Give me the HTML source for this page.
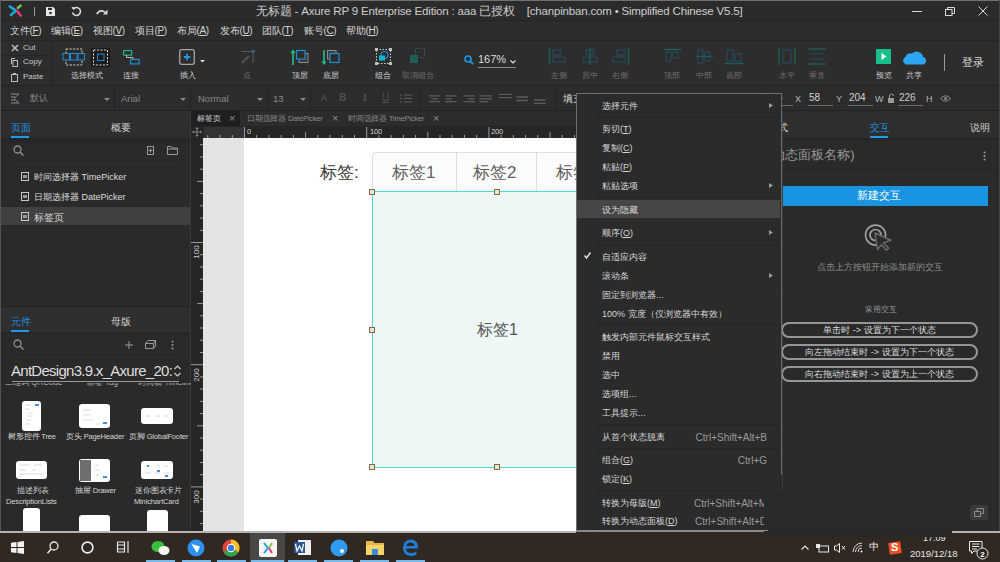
<!DOCTYPE html>
<html><head><meta charset="utf-8">
<style>
*{margin:0;padding:0;box-sizing:border-box}
html,body{width:1000px;height:562px;overflow:hidden;background:#2b2b2b;font-family:"Liberation Sans",sans-serif;color:#d8d8d8}
.a{position:absolute}
.t{position:absolute;white-space:nowrap;line-height:1}
svg{position:absolute;overflow:visible}
.mi{position:absolute;top:26px;font-size:10px;color:#d4d4d4;white-space:nowrap;line-height:1;letter-spacing:-0.3px}
.lb{position:absolute;top:72px;font-size:7.5px;color:#cfcfcf;white-space:nowrap;line-height:1;text-align:center;width:60px;margin-left:-30px}
.lbd{color:#6e6e6e}
.sb{position:absolute;top:93px;font-size:9.5px;color:#8a8a8a;white-space:nowrap;line-height:1}
.dv{position:absolute;width:1px;background:#222}
.cm{position:absolute;left:602px;font-size:9px;color:#d6d6d6;white-space:nowrap;line-height:1}
.cms{position:absolute;right:233px;font-size:10px;color:#9a9a9a;white-space:nowrap;line-height:1}
</style></head><body>
<!-- ============ TITLE BAR ============ -->
<div class="a" style="left:0;top:0;width:1000px;height:21px;background:#2b2b2b"></div>
<div class="a" style="left:0;top:0;width:1000px;height:1px;background:#707070"></div>
<div class="a" style="left:0;top:20px;width:1000px;height:1px;background:#242424"></div>
<div class="a" style="left:0;top:0;width:1px;height:532px;background:#555"></div>
<div class="a" style="left:999px;top:0;width:1px;height:532px;background:#444"></div>
<!-- logo -->
<svg style="left:7px;top:4px" width="16" height="14" viewBox="0 0 16 14">
<path d="M1.8 1.8 L8.8 6.6 L3.2 11.8" stroke="#1ea6dc" stroke-width="2.6" fill="none" stroke-linejoin="round"/>
<path d="M10 7.2 L13.8 11.6" stroke="#e2357c" stroke-width="2.6" stroke-linecap="round"/>
<path d="M10.8 4 L13.6 1.6" stroke="#86c24c" stroke-width="2.4" stroke-linecap="round"/>
</svg>
<div class="a" style="left:34px;top:7px;width:1px;height:9px;background:#9a9a9a"></div>
<!-- save -->
<svg style="left:46px;top:7px" width="9" height="9" viewBox="0 0 9 9"><path d="M0 0 H7 L9 2 V9 H0 Z" fill="#e8e8e8"/><rect x="2" y="0.8" width="4" height="2.2" fill="#2b2b2b"/><circle cx="4.5" cy="6" r="1.3" fill="#2b2b2b"/></svg>
<!-- undo -->
<svg style="left:71px;top:6px" width="11" height="11" viewBox="0 0 11 11"><path d="M2.2 3.2 A4 4 0 1 1 1.6 6.5" stroke="#dcdcdc" stroke-width="1.5" fill="none"/><path d="M0.5 1 L3.2 1.3 L2.3 4.2 Z" fill="#dcdcdc"/></svg>
<!-- redo -->
<svg style="left:96px;top:8px" width="12" height="7" viewBox="0 0 12 7"><path d="M0.8 6 Q4.5 0.8 9 4.2" stroke="#dcdcdc" stroke-width="1.7" fill="none"/><path d="M11.5 1.5 L11.5 6.5 L7 6.5 Z" fill="#dcdcdc"/></svg>
<div class="t" id="title" style="left:256px;top:6px;font-size:11.5px;color:#cdcdcd;letter-spacing:-0.18px">无标题 - Axure RP 9 Enterprise Edition : aaa 已授权 &nbsp;&nbsp; [chanpinban.com • Simplified Chinese V5.5]</div>
<!-- window controls -->
<div class="a" style="left:912px;top:11px;width:10px;height:1px;background:#d8d8d8"></div>
<svg style="left:945px;top:7px" width="10" height="9" viewBox="0 0 10 9"><rect x="0.5" y="2.5" width="6.5" height="6" stroke="#d8d8d8" fill="none"/><path d="M2.5 2.5 V0.5 H9.5 V6.5 H7" stroke="#d8d8d8" fill="none"/></svg>
<svg style="left:978px;top:6px" width="10" height="10" viewBox="0 0 10 10"><path d="M0.5 0.5 L9.5 9.5 M9.5 0.5 L0.5 9.5" stroke="#d8d8d8" stroke-width="1"/></svg>

<!-- ============ MENU BAR ============ -->
<div class="a" style="left:1px;top:21px;width:998px;height:19px;background:#2c2c2c"></div>
<div class="mi" style="left:10px">文件(<u>F</u>)</div>
<div class="mi" style="left:51px">编辑(<u>E</u>)</div>
<div class="mi" style="left:93px">视图(<u>V</u>)</div>
<div class="mi" style="left:135px">项目(<u>P</u>)</div>
<div class="mi" style="left:177px">布局(<u>A</u>)</div>
<div class="mi" style="left:220px">发布(<u>U</u>)</div>
<div class="mi" style="left:262px">团队(<u>T</u>)</div>
<div class="mi" style="left:304px">账号(<u>C</u>)</div>
<div class="mi" style="left:346px">帮助(<u>H</u>)</div>
<!-- ============ TOOLBAR ============ -->
<div class="a" style="left:1px;top:40px;width:998px;height:45px;background:#2d2d2d"></div>
<div class="a" style="left:1px;top:40px;width:998px;height:1px;background:#262626"></div>
<div class="a" style="left:52px;top:41px;width:1px;height:44px;background:#242424"></div>
<div class="a" style="left:1px;top:55px;width:51px;height:1px;background:#262626"></div>
<div class="a" style="left:1px;top:70px;width:51px;height:1px;background:#262626"></div>
<!-- cut copy paste -->
<svg style="left:11px;top:44px" width="8" height="8" viewBox="0 0 8 8"><path d="M1 1 L7 7 M7 1 L1 7" stroke="#bdbdbd" stroke-width="1.5"/></svg>
<div class="t" style="left:23px;top:44px;font-size:8px;color:#c8c8c8">Cut</div>
<svg style="left:11px;top:58px" width="7" height="9" viewBox="0 0 7 9"><path d="M0.5 6 V0.5 H4" stroke="#bdbdbd" fill="none"/><rect x="2" y="2.5" width="4.5" height="6" stroke="#bdbdbd" fill="none"/></svg>
<div class="t" style="left:23px;top:58px;font-size:8px;color:#c8c8c8">Copy</div>
<svg style="left:11px;top:73px" width="7" height="9" viewBox="0 0 7 9"><rect x="0.5" y="1.5" width="6" height="7" stroke="#bdbdbd" fill="none"/><rect x="2" y="0" width="3" height="2" fill="#bdbdbd"/></svg>
<div class="t" style="left:23px;top:73px;font-size:8px;color:#c8c8c8">Paste</div>
<!-- select mode -->
<svg style="left:62px;top:48px" width="50" height="19" viewBox="0 0 50 19">
<rect x="4" y="1" width="16" height="16" stroke="#cfc8b8" stroke-dasharray="2.2 1.3" fill="none"/>
<rect x="1" y="5.5" width="6.5" height="6.5" stroke="#1e8fd6" stroke-width="1" fill="#2d2d2d"/>
<rect x="8.5" y="5.5" width="6.5" height="6.5" stroke="#1e8fd6" stroke-width="1" fill="#2d2d2d"/>
<rect x="16" y="5.5" width="6.5" height="6.5" stroke="#1e8fd6" stroke-width="1" fill="#2d2d2d"/>
<rect x="29" y="0" width="19" height="19" fill="#1a1a1a"/>
<rect x="31.5" y="2" width="14" height="15" stroke="#d8d0c2" stroke-dasharray="2.2 1.3" fill="none"/>
<rect x="35.5" y="6" width="6.5" height="6.5" stroke="#1e8fd6" stroke-width="1" fill="none"/>
</svg>
<div class="lb" style="left:87px">选择模式</div>
<!-- connect -->
<svg style="left:123px;top:50px" width="17" height="15" viewBox="0 0 17 15">
<rect x="0.6" y="0.6" width="8" height="4.5" stroke="#1db38a" stroke-width="1.2" fill="none"/>
<path d="M3.5 5 V7.5 H10 V9" stroke="#c9b79a" stroke-width="1" fill="none"/>
<rect x="7.6" y="9.4" width="8.5" height="4.5" stroke="#1e8fd6" stroke-width="1.2" fill="none"/>
</svg>
<div class="lb" style="left:131px">连接</div>
<!-- insert -->
<svg style="left:179px;top:49px" width="28" height="16" viewBox="0 0 28 16">
<rect x="0.7" y="0.7" width="14.6" height="14.6" rx="2" stroke="#a5a5a5" stroke-width="1.3" fill="none"/>
<path d="M8 4.8 V11.2 M4.8 8 H11.2" stroke="#1e9ae8" stroke-width="1.8"/>
<path d="M21 11 H26 L23.5 13.6 Z" fill="#dcdcdc"/>
</svg>
<div class="lb" style="left:188px">插入</div>
<!-- point dim -->
<svg style="left:240px;top:50px" width="15" height="15" viewBox="0 0 15 15">
<path d="M1 1.5 H13" stroke="#555" stroke-width="1"/><path d="M13 1 V13" stroke="#555" stroke-width="1.2"/><path d="M2 13 L9 6" stroke="#555" stroke-width="2"/><rect x="12" y="0" width="2.5" height="3" fill="#2a6aa0"/>
</svg>
<div class="lb lbd" style="left:247px">点</div>
<!-- top layer -->
<svg style="left:291px;top:49px" width="18" height="17" viewBox="0 0 18 17">
<path d="M2 16 V2" stroke="#1fc08e" stroke-width="1.6"/><path d="M-0.5 4 L2 0.5 L4.5 4 Z" fill="#1fc08e"/>
<rect x="8" y="4.5" width="9" height="9" stroke="#8b8b8b" fill="#3a3a3a"/>
<rect x="5.5" y="1.5" width="8.5" height="8.5" stroke="#1e8fd6" stroke-width="1.2" fill="#2d2d2d"/>
</svg>
<div class="lb" style="left:300px">顶层</div>
<!-- bottom layer -->
<svg style="left:322px;top:49px" width="18" height="17" viewBox="0 0 18 17">
<path d="M2 1 V15" stroke="#1fc08e" stroke-width="1.6"/><path d="M-0.5 12.5 L2 16 L4.5 12.5 Z" fill="#1fc08e"/>
<rect x="5.5" y="1.5" width="8.5" height="8.5" stroke="#8b8b8b" fill="#3a3a3a"/>
<rect x="8" y="4.5" width="9" height="9" stroke="#1e8fd6" stroke-width="1.2" fill="#2d2d2d"/>
</svg>
<div class="lb" style="left:331px">底层</div>
<!-- group -->
<svg style="left:375px;top:48px" width="17" height="17" viewBox="0 0 17 17">
<rect x="1.5" y="1.5" width="14" height="14" stroke="#d0d0d0" stroke-dasharray="1.5 1.5" fill="none"/>
<rect x="0" y="0" width="3" height="3" fill="#c0c0c0"/><rect x="14" y="0" width="3" height="3" fill="#c0c0c0"/><rect x="0" y="14" width="3" height="3" fill="#c0c0c0"/><rect x="14" y="14" width="3" height="3" fill="#c0c0c0"/>
<circle cx="9.5" cy="7" r="3.5" stroke="#1e8fd6" stroke-width="1.2" fill="none"/>
<rect x="4" y="7.5" width="6" height="5" fill="#14b6cc"/>
</svg>
<div class="lb" style="left:383px">组合</div>
<!-- ungroup dim -->
<svg style="left:409px;top:48px" width="17" height="17" viewBox="0 0 17 17">
<rect x="6.5" y="0.5" width="9" height="9" stroke="#3e5a6a" stroke-dasharray="1.5 1.5" fill="none"/>
<rect x="1" y="7" width="8" height="8" fill="#1f5f55"/>
</svg>
<div class="lb lbd" style="left:418px">取消组合</div>
<!-- zoom -->
<svg style="left:464px;top:55px" width="10" height="10" viewBox="0 0 10 10"><circle cx="4" cy="4" r="3" stroke="#1e9ae8" stroke-width="1.6" fill="none"/><path d="M6.2 6.2 L9.2 9.2" stroke="#1e9ae8" stroke-width="1.8"/></svg>
<div class="t" style="left:478px;top:54px;font-size:11px;color:#dcdcdc">167%</div>
<svg style="left:510px;top:60px" width="6" height="4" viewBox="0 0 6 4"><path d="M0.5 0.5 L3 3 L5.5 0.5" stroke="#dcdcdc" stroke-width="1.2" fill="none"/></svg>
<div class="a" style="left:478px;top:67px;width:38px;height:1px;background:#8a8a8a"></div>
<!-- align dim icons -->
<svg style="left:548px;top:48px" width="20" height="17" viewBox="0 0 20 17"><path d="M1.5 0 V17" stroke="#1b5d50" stroke-width="1.6"/><rect x="5" y="2" width="8" height="5" stroke="#234e66" fill="none"/><rect x="5" y="9" width="12" height="5" stroke="#234e66" fill="none"/></svg>
<div class="lb lbd" style="left:559px">左侧</div>
<svg style="left:581px;top:48px" width="18" height="17" viewBox="0 0 18 17"><path d="M9 0 V17" stroke="#1b5d50" stroke-width="1.4"/><rect x="5" y="2" width="8" height="5" stroke="#234e66" fill="none"/><rect x="2" y="9" width="14" height="5" stroke="#234e66" fill="none"/></svg>
<div class="lb lbd" style="left:590px">居中</div>
<svg style="left:610px;top:48px" width="20" height="17" viewBox="0 0 20 17"><path d="M18.5 0 V17" stroke="#1b5d50" stroke-width="1.6"/><rect x="7" y="2" width="8" height="5" stroke="#234e66" fill="none"/><rect x="3" y="9" width="12" height="5" stroke="#234e66" fill="none"/></svg>
<div class="lb lbd" style="left:620px">右侧</div>
<svg style="left:664px;top:48px" width="17" height="17" viewBox="0 0 17 17"><path d="M0 1.5 H17" stroke="#1b5d50" stroke-width="1.6"/><rect x="2" y="4" width="5" height="9" stroke="#234e66" fill="none"/><rect x="9" y="4" width="5" height="6" stroke="#234e66" fill="none"/></svg>
<div class="lb lbd" style="left:672px">顶部</div>
<svg style="left:696px;top:48px" width="17" height="17" viewBox="0 0 17 17"><path d="M0 8.5 H17" stroke="#1b5d50" stroke-width="1.4"/><rect x="2" y="2" width="5" height="13" stroke="#234e66" fill="none"/><rect x="9" y="4" width="5" height="9" stroke="#234e66" fill="none"/></svg>
<div class="lb lbd" style="left:704px">中部</div>
<svg style="left:724px;top:48px" width="20" height="17" viewBox="0 0 20 17"><path d="M0 15.5 H20" stroke="#1b5d50" stroke-width="1.6"/><rect x="3" y="2" width="6" height="11" stroke="#234e66" fill="none"/><rect x="11" y="6" width="6" height="7" stroke="#234e66" fill="none"/></svg>
<div class="lb lbd" style="left:734px">底部</div>
<svg style="left:778px;top:48px" width="18" height="17" viewBox="0 0 18 17"><path d="M1 0 V17 M17 0 V17" stroke="#1b5d50" stroke-width="1.4"/><rect x="5" y="2" width="8" height="13" stroke="#234e66" fill="none"/></svg>
<div class="lb lbd" style="left:787px">水平</div>
<svg style="left:808px;top:48px" width="18" height="17" viewBox="0 0 18 17"><path d="M0 1 H18 M0 16 H18" stroke="#1b5d50" stroke-width="1.4"/><path d="M2 6 H16 M2 11 H16" stroke="#234e66"/></svg>
<div class="lb lbd" style="left:817px">垂直</div>
<!-- preview -->
<svg style="left:876px;top:49px" width="15" height="15" viewBox="0 0 15 15"><rect width="15" height="15" fill="#17bf8d"/><path d="M5.5 4 L10.5 7.5 L5.5 11 Z" fill="#fff"/></svg>
<div class="lb" style="left:884px">预览</div>
<!-- share cloud -->
<svg style="left:902px;top:49px" width="24" height="16" viewBox="0 0 24 16"><path d="M4 15.5 A4 4 0 0 1 3.5 8 A5 5 0 0 1 10 4.5 A6.5 6.5 0 0 1 21 8 A3.8 3.8 0 0 1 20.5 15.5 Z" fill="#2ea5f2"/></svg>
<div class="lb" style="left:914px">共享</div>
<div class="a" style="left:944px;top:54px;width:1px;height:17px;background:#9a9a9a"></div>
<div class="t" style="left:962px;top:57px;font-size:11px;color:#dedede">登录</div>
<!-- ============ STYLE BAR ============ -->
<div class="a" style="left:1px;top:85px;width:998px;height:26px;background:#2c2c2c"></div>
<div class="a" style="left:1px;top:85px;width:998px;height:1px;background:#232323"></div>
<div class="a" style="left:1px;top:110px;width:998px;height:1px;background:#222"></div>
<div class="dv" style="left:114px;top:86px;height:24px"></div>
<div class="dv" style="left:190px;top:86px;height:24px"></div>
<div class="dv" style="left:268px;top:86px;height:24px"></div>
<div class="dv" style="left:310px;top:86px;height:24px"></div>
<div class="dv" style="left:420px;top:86px;height:24px"></div>
<div class="dv" style="left:556px;top:86px;height:24px"></div>
<svg style="left:11px;top:93px" width="10" height="11" viewBox="0 0 10 11"><path d="M0 1 H8 L3 5.5 L8 10 H0 M0 4 H4 M0 7 H4" stroke="#8a8a8a" stroke-width="1" fill="none"/></svg>
<div class="sb" style="left:30px;top:94px;font-size:9px">默认</div>
<svg style="left:104px;top:98px" width="6" height="3" viewBox="0 0 6 3"><path d="M0 0 H6 L3 3 Z" fill="#8a8a8a"/></svg>
<div class="sb" style="left:121px;top:94px">Arial</div>
<svg style="left:180px;top:98px" width="6" height="3" viewBox="0 0 6 3"><path d="M0 0 H6 L3 3 Z" fill="#8a8a8a"/></svg>
<div class="sb" style="left:198px;top:94px">Normal</div>
<svg style="left:257px;top:98px" width="6" height="3" viewBox="0 0 6 3"><path d="M0 0 H6 L3 3 Z" fill="#8a8a8a"/></svg>
<div class="sb" style="left:273px;top:94px">13</div>
<svg style="left:300px;top:98px" width="6" height="3" viewBox="0 0 6 3"><path d="M0 0 H6 L3 3 Z" fill="#8a8a8a"/></svg>
<div class="sb" style="left:321px;top:94px;color:#5a5a5a;font-size:9px">A</div>
<div class="sb" style="left:339px;top:93px;color:#505050;font-size:10px;font-weight:bold">B</div>
<div class="sb" style="left:363px;top:93px;color:#505050;font-size:10px;font-family:'Liberation Serif',serif;font-weight:bold">I</div>
<div class="sb" style="left:382px;top:93px;color:#505050;font-size:10px;text-decoration:underline">U</div>
<svg style="left:400px;top:94px" width="12" height="9" viewBox="0 0 12 9"><path d="M0 1 H2 M4 1 H12 M0 4.5 H2 M4 4.5 H12 M0 8 H2 M4 8 H12" stroke="#5e5e5e"/></svg>
<svg style="left:420px;top:88px" width="130" height="20" viewBox="0 0 130 20"><g stroke="#5c5c5c" stroke-width="1.3">
<path d="M9 7.9 H20 M11 10.8 H18 M9 13.7 H20"/>
<path d="M25.5 7.9 H36.5 M25.5 10.8 H32 M25.5 13.7 H36.5"/>
<path d="M43.5 7.9 H55 M47.5 10.8 H55 M43.5 13.7 H55"/>
<path d="M59.5 7.9 H72 M59.5 10.8 H72 M59.5 13.7 H68"/>
<path d="M79 6.3 H91.5 M79 9.6 H91.5"/>
<path d="M96.5 9 H108 M96.5 12.5 H108"/>
<path d="M114 12 H125.5 M114 15.4 H125.5"/>
</g></svg>
<div class="sb" style="left:563px;top:94px;color:#dcdcdc;font-size:10px">填充</div>
<!-- right fields -->
<div class="dv" style="left:762px;top:86px;height:24px"></div>
<div class="sb" style="left:777px;top:93px;color:#d0d0d0;font-size:10px">5</div>
<div class="a" style="left:768px;top:105px;width:25px;height:1px;background:#6a6a6a"></div>
<div class="sb" style="left:795px;top:95px;color:#b8b8b8;font-size:9px">X</div>
<div class="sb" style="left:809px;top:93px;color:#d0d0d0;font-size:10px">58</div>
<div class="a" style="left:808px;top:105px;width:25px;height:1px;background:#6a6a6a"></div>
<div class="sb" style="left:836px;top:95px;color:#b8b8b8;font-size:9px">Y</div>
<div class="sb" style="left:849px;top:93px;color:#d0d0d0;font-size:10px">204</div>
<div class="a" style="left:848px;top:105px;width:25px;height:1px;background:#6a6a6a"></div>
<div class="sb" style="left:875px;top:95px;color:#b8b8b8;font-size:9px">W</div>
<svg style="left:888px;top:94px" width="8" height="9" viewBox="0 0 8 9"><rect x="0" y="4" width="6" height="5" fill="#9a9a9a"/><path d="M1.5 4 V2 A2 2 0 0 1 5.5 2" stroke="#9a9a9a" stroke-width="1" fill="none"/></svg>
<div class="sb" style="left:899px;top:93px;color:#d0d0d0;font-size:10px">226</div>
<div class="a" style="left:898px;top:105px;width:25px;height:1px;background:#6a6a6a"></div>
<div class="sb" style="left:926px;top:95px;color:#b8b8b8;font-size:9px">H</div>
<svg style="left:940px;top:95px" width="11" height="7" viewBox="0 0 11 7"><path d="M0.5 3.5 Q5.5 -2 10.5 3.5 Q5.5 9 0.5 3.5 Z" stroke="#8a8a8a" fill="none"/><circle cx="5.5" cy="3.5" r="1.5" fill="#8a8a8a"/></svg>
<!-- ============ LEFT PANEL ============ -->
<div class="a" style="left:1px;top:111px;width:190px;height:421px;background:#2a2a2a"></div>
<div class="a" style="left:1px;top:111px;width:190px;height:27px;background:#2e2e2e"></div>
<div class="a" style="left:190px;top:111px;width:1px;height:421px;background:#383838"></div>
<div class="t" style="left:11px;top:123px;font-size:9.5px;color:#1e90e0">页面</div>
<div class="a" style="left:11px;top:136px;width:18px;height:2px;background:#1e9ae8"></div>
<div class="t" style="left:111px;top:123px;font-size:9.5px;color:#d4d4d4">概要</div>
<div class="a" style="left:1px;top:138px;width:189px;height:5px;background:#262626"></div>
<svg style="left:13px;top:145px" width="11" height="11" viewBox="0 0 11 11"><circle cx="4.5" cy="4.5" r="3.5" stroke="#8f8f8f" stroke-width="1.3" fill="none"/><path d="M7 7 L10.5 10.5" stroke="#8f8f8f" stroke-width="1.5"/></svg>
<svg style="left:147px;top:146px" width="7" height="9" viewBox="0 0 7 9"><rect x="0.5" y="0.5" width="6" height="8" stroke="#9a9a9a" fill="none"/><path d="M3.5 2.5 V6.5 M1.5 4.5 H5.5" stroke="#9a9a9a"/></svg>
<svg style="left:167px;top:146px" width="11" height="9" viewBox="0 0 11 9"><path d="M0.5 0.5 H4 L5 2 H10.5 V8.5 H0.5 Z M0.5 3 H10.5" stroke="#9a9a9a" fill="none"/></svg>
<div class="a" style="left:12px;top:164px;width:166px;height:1px;background:#303030"></div>
<!-- pages -->
<svg style="left:21px;top:172px" width="8" height="9" viewBox="0 0 8 9"><rect x="0.5" y="0.5" width="7" height="8" stroke="#c8c8c8" fill="none"/><rect x="2" y="3" width="4" height="3" fill="#9a9a9a"/></svg>
<div class="t" style="left:34px;top:173px;font-size:9px;color:#dcdcdc">时间选择器 TimePicker</div>
<svg style="left:21px;top:192px" width="8" height="9" viewBox="0 0 8 9"><rect x="0.5" y="0.5" width="7" height="8" stroke="#c8c8c8" fill="none"/><rect x="2" y="3" width="4" height="3" fill="#9a9a9a"/></svg>
<div class="t" style="left:34px;top:193px;font-size:9px;color:#dcdcdc">日期选择器 DatePicker</div>
<div class="a" style="left:1px;top:207px;width:189px;height:18px;background:#404040"></div>
<svg style="left:21px;top:212px" width="8" height="9" viewBox="0 0 8 9"><rect x="0.5" y="0.5" width="7" height="8" stroke="#c8c8c8" fill="none"/><rect x="2" y="3" width="4" height="3" fill="#9a9a9a"/></svg>
<div class="t" style="left:34px;top:213px;font-size:9.5px;color:#d8d8d8">标签页</div>
<!-- components -->
<div class="a" style="left:1px;top:306px;width:189px;height:1px;background:#242424"></div>
<div class="a" style="left:1px;top:307px;width:189px;height:25px;background:#2f2f2f"></div>
<div class="t" style="left:11px;top:317px;font-size:9.5px;color:#1e90e0">元件</div>
<div class="a" style="left:11px;top:330px;width:18px;height:2px;background:#1e9ae8"></div>
<div class="t" style="left:111px;top:317px;font-size:9.5px;color:#d4d4d4">母版</div>
<div class="a" style="left:1px;top:332px;width:189px;height:3px;background:#272727"></div>
<svg style="left:13px;top:339px" width="11" height="11" viewBox="0 0 11 11"><circle cx="4.5" cy="4.5" r="3.5" stroke="#8f8f8f" stroke-width="1.3" fill="none"/><path d="M7 7 L10.5 10.5" stroke="#8f8f8f" stroke-width="1.5"/></svg>
<svg style="left:125px;top:341px" width="8" height="8" viewBox="0 0 8 8"><path d="M4 0 V8 M0 4 H8" stroke="#9a9a9a"/></svg>
<svg style="left:145px;top:340px" width="11" height="9" viewBox="0 0 11 9"><path d="M0.5 3.5 H8.5 V8.5 H0.5 Z M0.5 3.5 L3 0.5 H10.5 L8.5 3.5 M10.5 0.5 V6 L8.5 8.5" stroke="#9a9a9a" fill="none"/></svg>
<svg style="left:171px;top:340px" width="3" height="10" viewBox="0 0 3 10"><circle cx="1.5" cy="1.5" r="1" fill="#9a9a9a"/><circle cx="1.5" cy="5" r="1" fill="#9a9a9a"/><circle cx="1.5" cy="8.5" r="1" fill="#9a9a9a"/></svg>
<div class="a" style="left:12px;top:357px;width:166px;height:1px;background:#303030"></div>
<div class="t" id="antd" style="left:11px;top:363px;font-size:15px;color:#dedede;letter-spacing:-0.72px">AntDesign3.9.x_Axure_20:</div>
<svg style="left:174px;top:365px" width="7" height="12" viewBox="0 0 7 12"><path d="M0.5 4 L3.5 1 L6.5 4 M0.5 8 L3.5 11 L6.5 8" stroke="#cfcfcf" stroke-width="1.2" fill="none"/></svg>
<div class="a" style="left:12px;top:381px;width:167px;height:1px;background:#9a9a9a"></div>
<div class="t" style="left:5px;top:383px;font-size:8px;color:#bdbdbd;height:4px;overflow:hidden;line-height:1;clip-path:inset(0 0 0 0)"><span style="position:relative;top:-4px">二维码 QRCode &nbsp; &nbsp; &nbsp; &nbsp; &nbsp; 标签 Tag &nbsp; &nbsp; &nbsp; &nbsp; 时间轴 Timeline</span></div>
<!-- grid -->
<div class="a" style="left:22px;top:401px;width:19px;height:30px;background:#fff;border-radius:3px"></div>
<div class="a" style="left:79px;top:404px;width:31px;height:24px;background:#fff;border-radius:3px"></div>
<div class="a" style="left:141px;top:408px;width:32px;height:16px;background:#fff;border-radius:3px"></div>
<div class="t" style="left:8px;top:433px;font-size:7.5px;color:#d4d4d4;letter-spacing:-0.15px">树形控件 Tree</div>
<div class="t" style="left:66px;top:433px;font-size:7.5px;color:#d4d4d4;letter-spacing:-0.15px">页头 PageHeader</div>
<div class="t" style="left:129px;top:433px;font-size:7.5px;color:#d4d4d4;letter-spacing:-0.15px">页脚 GlobalFooter</div>
<div class="a" style="left:16px;top:461px;width:31px;height:18px;background:#fff;border-radius:3px"></div>
<div class="a" style="left:79px;top:459px;width:31px;height:23px;background:#fff;border-radius:3px"></div>
<div class="a" style="left:80px;top:460px;width:11px;height:21px;background:#6e6e6e"></div>
<div class="a" style="left:141px;top:461px;width:32px;height:18px;background:#fff;border-radius:3px"></div>

<svg style="left:0;top:0" width="191" height="532">
<g stroke="#d0d0d0" stroke-width="0.8">
<path d="M25 405 H31 M33 405 H38 M25 409 H30 M27 413 H33 M27 416 H32 M27 420 H31 M25 424 H30"/>
<path d="M83 410 H91 M83 415 H90 M83 420 H93 M96 424 H100"/>
<path d="M146 416 H151 M155 416 H160 M164 416 H169"/>
<path d="M19 465 H30 M34 465 H42 M19 470 H26 M32 470 H36 M19 474 H44"/>
<path d="M95 465 H99 M95 470 H100 M95 475 H99"/>
<path d="M145 466 H150 M155 466 H160 M164 466 H168 M145 473 H151 M155 473 H160 M164 473 H169"/>
<path d="M26 515 H37 M26 521 H31 M33 521 H37"/>
<path d="M84 520 H89 M84 526 H89 M96 520 H100"/>
<path d="M151 515 H164 M151 520 H162"/>
</g>
<g fill="#4a90e2">
<rect x="35" y="404" width="4" height="2"/><rect x="103" y="422" width="4" height="2"/><rect x="103" y="476" width="4" height="2"/>
<rect x="147" y="465" width="2" height="2"/><rect x="157" y="470" width="3" height="2"/><rect x="165" y="475" width="3" height="2"/>
<rect x="25" y="511" width="12" height="2"/><rect x="153" y="524" width="7" height="3"/>
</g>
</svg>
<div class="t" style="left:17px;top:487px;font-size:7.5px;color:#d4d4d4;letter-spacing:-0.15px">描述列表</div>
<div class="t" style="left:6px;top:498px;font-size:7.5px;color:#d4d4d4;letter-spacing:-0.15px">DescriptionLists</div>
<div class="t" style="left:75px;top:487px;font-size:7.5px;color:#d4d4d4;letter-spacing:-0.15px">抽屉 Drawer</div>
<div class="t" style="left:135px;top:487px;font-size:7.5px;color:#d4d4d4;letter-spacing:-0.15px">迷你图表卡片</div>
<div class="t" style="left:134px;top:498px;font-size:7.5px;color:#d4d4d4;letter-spacing:-0.15px">MinichartCard</div>
<div class="a" style="left:23px;top:508px;width:17px;height:24px;background:#fff;border-radius:3px 3px 0 0"></div>
<div class="a" style="left:79px;top:515px;width:31px;height:17px;background:#fff;border-radius:3px 3px 0 0"></div>
<div class="a" style="left:147px;top:510px;width:21px;height:22px;background:#fff;border-radius:3px 3px 0 0"></div>

<!-- ============ CANVAS ============ -->
<div class="a" style="left:191px;top:111px;width:386px;height:15px;background:#2c2c2c"></div>
<div class="a" style="left:191px;top:111px;width:49px;height:15px;background:#1f1f1f"></div>
<div class="t" style="left:197px;top:115px;font-size:8px;color:#d8d8d8">标签页</div>
<div class="t" style="left:229px;top:113px;font-size:11px;color:#8a8a8a">×</div>
<div class="t" style="left:247px;top:115px;font-size:7.5px;color:#8a8a8a;letter-spacing:-0.2px">日期选择器 DatePicker</div>
<div class="t" style="left:332px;top:113px;font-size:11px;color:#8a8a8a">×</div>
<div class="t" style="left:348px;top:115px;font-size:7.5px;color:#8a8a8a;letter-spacing:-0.2px">时间选择器 TimePicker</div>
<div class="t" style="left:433px;top:113px;font-size:11px;color:#8a8a8a">×</div>
<!-- rulers -->
<div class="a" style="left:191px;top:126px;width:386px;height:12px;background:#262626"></div>
<div class="a" style="left:204px;top:127px;width:40px;height:11px;background:#333"></div>
<svg style="left:192px;top:127px" width="10" height="10" viewBox="0 0 10 10"><path d="M5 1 V9 M1 5 H9" stroke="#8a8a8a" stroke-width="0.9"/><path d="M5 0 L6.5 2 H3.5 Z M5 10 L3.5 8 H6.5 Z M0 5 L2 3.5 V6.5 Z M10 5 L8 6.5 V3.5 Z" fill="#8a8a8a"/></svg>
<div class="a" style="left:191px;top:138px;width:12px;height:394px;background:#262626"></div>
<svg style="left:0;top:0" width="1000" height="562"><path d="M207.8 135 V138 M220.1 135 V138 M232.3 135 V138 M244.5 127 V138 M256.7 135 V138 M268.9 135 V138 M281.2 135 V138 M293.4 135 V138 M305.6 132 V138 M317.8 135 V138 M330.0 135 V138 M342.3 135 V138 M354.5 135 V138 M366.7 127 V138 M378.9 135 V138 M391.1 135 V138 M403.4 135 V138 M415.6 135 V138 M427.8 132 V138 M440.0 135 V138 M452.2 135 V138 M464.5 135 V138 M476.7 135 V138 M488.9 127 V138 M501.1 135 V138 M513.3 135 V138 M525.6 135 V138 M537.8 135 V138 M550.0 132 V138 M562.2 135 V138 M574.4 135 V138 M200 144.7 H203 M200 157.0 H203 M200 169.2 H203 M197 181.4 H203 M200 193.6 H203 M200 205.8 H203 M200 218.1 H203 M200 230.3 H203 M191 242.5 H203 M200 254.7 H203 M200 266.9 H203 M200 279.2 H203 M200 291.4 H203 M197 303.6 H203 M200 315.8 H203 M200 328.0 H203 M200 340.3 H203 M200 352.5 H203 M191 364.7 H203 M200 376.9 H203 M200 389.1 H203 M200 401.4 H203 M200 413.6 H203 M197 425.8 H203 M200 438.0 H203 M200 450.2 H203 M200 462.5 H203 M200 474.7 H203 M191 486.9 H203 M200 499.1 H203 M200 511.3 H203 M200 523.6 H203" stroke="#9a9a9a" stroke-width="1" fill="none"/></svg>
<div class="a" style="left:203px;top:138px;width:41px;height:394px;background:#e4e4e4"></div>
<div class="a" style="left:244px;top:138px;width:333px;height:394px;background:#ffffff"></div>
<div class="t" style="left:247px;top:128px;font-size:7.5px;color:#d4d4d4;letter-spacing:-0.15px">0</div>
<div class="t" style="left:370px;top:128px;font-size:7.5px;color:#d4d4d4;letter-spacing:-0.15px">100</div>
<div class="t" style="left:491px;top:128px;font-size:7.5px;color:#d4d4d4;letter-spacing:-0.15px">200</div>
<div class="t" style="left:190px;top:248px;font-size:8px;color:#cfcfcf;transform:rotate(-90deg);transform-origin:center">100</div>
<div class="t" style="left:190px;top:371px;font-size:8px;color:#cfcfcf;transform:rotate(-90deg)">200</div>
<div class="t" style="left:190px;top:493px;font-size:8px;color:#cfcfcf;transform:rotate(-90deg)">300</div>
<!-- canvas content -->
<div class="t" style="left:320px;top:164px;font-size:17px;color:#3a3a3a">标签:</div>
<div class="a" style="left:372px;top:152px;width:210px;height:40px;background:#fcfcfc;border:1px solid #e0e0e0;border-radius:4px 0 0 0"></div>
<div class="a" style="left:456px;top:153px;width:1px;height:38px;background:#dedede"></div>
<div class="a" style="left:536px;top:153px;width:1px;height:38px;background:#dedede"></div>
<div class="t" style="left:392px;top:164px;font-size:17px;color:#606060">标签1</div>
<div class="t" style="left:473px;top:164px;font-size:17px;color:#606060">标签2</div>
<div class="t" style="left:556px;top:164px;font-size:17px;color:#606060">标签3</div>
<div class="a" style="left:372px;top:191px;width:210px;height:277px;background:#eef7f6;border-left:1.5px solid #4ddbd6;border-top:1.5px solid #4ddbd6;border-bottom:1.5px solid #4ddbd6"></div>
<div class="t" style="left:477px;top:322px;font-size:16px;color:#555">标签1</div>
<div class="a" style="left:369px;top:189px;width:6px;height:6px;background:#fbe6b0;border:1px solid #6d6d6d"></div>
<div class="a" style="left:494px;top:189px;width:6px;height:6px;background:#fbe6b0;border:1px solid #6d6d6d"></div>
<div class="a" style="left:369px;top:327px;width:6px;height:6px;background:#fbe6b0;border:1px solid #6d6d6d"></div>
<div class="a" style="left:369px;top:464px;width:6px;height:6px;background:#fbe6b0;border:1px solid #6d6d6d"></div>
<div class="a" style="left:494px;top:464px;width:6px;height:6px;background:#fbe6b0;border:1px solid #6d6d6d"></div>
<!-- ============ RIGHT PANEL ============ -->
<div class="a" style="left:782px;top:111px;width:217px;height:421px;background:#2a2a2a"></div>
<div class="a" style="left:782px;top:111px;width:1px;height:421px;background:#3c3c3c"></div>
<div class="a" style="left:783px;top:111px;width:216px;height:27px;background:#2e2e2e"></div>
<div class="t" style="left:778px;top:123px;font-size:9.5px;color:#d4d4d4">式</div>
<div class="t" style="left:870px;top:123px;font-size:9.5px;color:#1e90e0">交互</div>
<div class="a" style="left:870px;top:136px;width:18px;height:2px;background:#1e9ae8"></div>
<div class="t" style="left:970px;top:123px;font-size:9.5px;color:#d4d4d4">说明</div>
<div class="a" style="left:783px;top:138px;width:216px;height:2px;background:#262626"></div>
<div class="t" style="left:768px;top:148px;font-size:13px;color:#9a9a9a">(动态面板名称)</div>
<svg style="left:983px;top:151px" width="3" height="10" viewBox="0 0 3 10"><circle cx="1.5" cy="1.5" r="1" fill="#9a9a9a"/><circle cx="1.5" cy="5" r="1" fill="#9a9a9a"/><circle cx="1.5" cy="8.5" r="1" fill="#9a9a9a"/></svg>
<div class="a" style="left:783px;top:169px;width:216px;height:1px;background:#232323"></div>
<div class="a" style="left:783px;top:186px;width:205px;height:20px;background:#1a94e0"></div>
<div class="t" style="left:839px;top:190px;font-size:11px;color:#fff;width:80px;text-align:center">新建交互</div>
<svg style="left:860px;top:222px" width="36" height="32" viewBox="0 0 36 32">
<path d="M25.2 15.6 A10 10 0 1 0 18.1 22.7" stroke="#a0a0a0" stroke-width="1.7" fill="none"/>
<path d="M21 13 A5.5 5.5 0 1 0 15.5 18.5" stroke="#a0a0a0" stroke-width="1.7" fill="none"/>
<path d="M15 11 L17.5 27.5 L21.5 22.8 L26.5 28.2 L28.6 26.2 L23.4 20.9 L31 18.3 Z" stroke="#6a6a6a" stroke-width="1.5" fill="#2a2a2a" stroke-linejoin="round"/>
</svg>
<div class="t" style="left:817px;top:263px;font-size:9px;color:#8e8e8e">点击上方按钮开始添加新的交互</div>
<div class="a" style="left:783px;top:289px;width:210px;height:1px;background:#2f2f2f"></div>
<div class="t" style="left:865px;top:306px;font-size:7.5px;color:#9a9a9a">常用交互</div>
<div class="a" style="left:781px;top:322px;width:197px;height:16px;border:2px solid #969696;border-radius:8px"></div>
<div class="t" style="left:783px;top:326px;width:193px;text-align:center;font-size:9px;color:#dcdcdc">单击时 -&gt; 设置为下一个状态</div>
<div class="a" style="left:781px;top:344px;width:197px;height:16px;border:2px solid #969696;border-radius:8px"></div>
<div class="t" style="left:783px;top:348px;width:193px;text-align:center;font-size:9px;color:#dcdcdc">向左拖动结束时 -&gt; 设置为下一个状态</div>
<div class="a" style="left:781px;top:366px;width:197px;height:16px;border:2px solid #969696;border-radius:8px"></div>
<div class="t" style="left:783px;top:370px;width:193px;text-align:center;font-size:9px;color:#dcdcdc">向右拖动结束时 -&gt; 设置为上一个状态</div>
<div class="a" style="left:970px;top:505px;width:18px;height:15px;background:#3a3a3a;border-radius:2px"></div>
<svg style="left:974px;top:508px" width="10" height="9" viewBox="0 0 10 9"><rect x="0.5" y="3.5" width="6" height="5" stroke="#8a8a8a" fill="none"/><path d="M3 3.5 V0.5 H9.5 V5.5 H6.5" stroke="#8a8a8a" fill="none"/></svg>
<!-- ============ CONTEXT MENU ============ -->
<div class="a" style="left:576px;top:93px;width:206px;height:438px;background:#2b2b2b"></div>
<div class="a" style="left:576px;top:93px;width:206px;height:1px;background:#6e6e6e"></div>
<div class="a" style="left:576px;top:93px;width:1px;height:438px;background:#6e6e6e"></div>
<div class="a" style="left:781px;top:93px;width:1px;height:382px;background:#6a6a6a"></div>
<div class="a" style="left:597px;top:94px;width:1px;height:437px;background:#252525"></div>
<div class="cm" style="top:101.5px">选择元件</div>
<svg style="left:769px;top:102.5px" width="4" height="5" viewBox="0 0 4 5"><path d="M0 0 L4 2.5 L0 5 Z" fill="#9a9a9a"/></svg>
<div class="a" style="left:598px;top:117px;width:182px;height:1px;background:#252525"></div>
<div class="cm" style="top:124.9px">剪切(<u>T</u>)</div>
<div class="cm" style="top:144.1px">复制(<u>C</u>)</div>
<div class="cm" style="top:163.0px">粘贴(<u>P</u>)</div>
<div class="cm" style="top:182.1px">粘贴选项</div>
<svg style="left:769px;top:183.1px" width="4" height="5" viewBox="0 0 4 5"><path d="M0 0 L4 2.5 L0 5 Z" fill="#9a9a9a"/></svg>
<div class="a" style="left:598px;top:197px;width:182px;height:1px;background:#252525"></div>
<div class="a" style="left:577px;top:200px;width:203px;height:18px;background:#464646"></div>
<div class="cm" style="top:205.5px">设为隐藏</div>
<div class="a" style="left:598px;top:222px;width:182px;height:1px;background:#252525"></div>
<div class="cm" style="top:229.0px">顺序(<u>O</u>)</div>
<svg style="left:769px;top:230.0px" width="4" height="5" viewBox="0 0 4 5"><path d="M0 0 L4 2.5 L0 5 Z" fill="#9a9a9a"/></svg>
<div class="a" style="left:598px;top:245px;width:182px;height:1px;background:#252525"></div>
<svg style="left:584px;top:252px" width="7" height="7" viewBox="0 0 7 7"><path d="M0.5 3.5 L2.5 6 L6.5 0.5" stroke="#e0e0e0" stroke-width="1.5" fill="none"/></svg>
<div class="cm" style="top:252.7px">自适应内容</div>
<div class="cm" style="top:271.5px">滚动条</div>
<svg style="left:769px;top:272.5px" width="4" height="5" viewBox="0 0 4 5"><path d="M0 0 L4 2.5 L0 5 Z" fill="#9a9a9a"/></svg>
<div class="cm" style="top:290.5px">固定到浏览器...</div>
<div class="cm" style="top:309.5px">100% 宽度（仅浏览器中有效）</div>
<div class="a" style="left:598px;top:324px;width:182px;height:1px;background:#252525"></div>
<div class="cm" style="top:333.2px">触发内部元件鼠标交互样式</div>
<div class="cm" style="top:351.7px">禁用</div>
<div class="cm" style="top:371.1px">选中</div>
<div class="cm" style="top:390.2px">选项组...</div>
<div class="cm" style="top:409.2px">工具提示...</div>
<div class="a" style="left:598px;top:424px;width:182px;height:1px;background:#252525"></div>
<div class="cm" style="top:432.5px">从首个状态脱离</div>
<div class="cms" style="top:432.5px">Ctrl+Shift+Alt+B</div>
<div class="a" style="left:598px;top:448px;width:182px;height:1px;background:#252525"></div>
<div class="cm" style="top:456.2px">组合(<u>G</u>)</div>
<div class="cms" style="top:456.2px">Ctrl+G</div>
<div class="cm" style="top:475.2px">锁定(<u>K</u>)</div>
<div class="a" style="left:598px;top:490px;width:182px;height:1px;background:#252525"></div>
<div class="cm" style="top:498.9px">转换为母版(<u>M</u>)</div>
<div class="cms" style="top:498.9px">Ctrl+Shift+Alt+M</div>
<div class="cm" style="top:517.4px">转换为动态面板(<u>D</u>)</div>
<div class="cms" style="top:517.4px">Ctrl+Shift+Alt+D</div>
<div class="a" style="left:764px;top:490px;width:19px;height:47px;background:#2a2a2a"></div>
<div class="a" style="left:576px;top:530px;width:192px;height:2px;background:#8a8a8a"></div>
<!-- ============ TASKBAR ============ -->
<div class="a" style="left:0;top:531px;width:576px;height:2px;background:#b4b4b4"></div>
<div class="a" style="left:952px;top:531px;width:48px;height:2px;background:#b4b4b4"></div>
<div class="a" style="left:0;top:533px;width:1000px;height:29px;background:#2f2823"></div>
<div class="a" style="left:764px;top:531px;width:188px;height:6px;background:#2a2826"></div>
<!-- windows -->
<svg style="left:11px;top:541px" width="13" height="13" viewBox="0 0 13 13"><path d="M0 1.8 L5.5 1 V6 H0 Z M6.5 0.9 L13 0 V6 H6.5 Z M0 7 H5.5 V12 L0 11.2 Z M6.5 7 H13 V13 L6.5 12.1 Z" fill="#f2f2f2"/></svg>
<svg style="left:47px;top:541px" width="12" height="13" viewBox="0 0 12 13"><circle cx="7" cy="5" r="4" stroke="#e8e8e8" stroke-width="1.3" fill="none"/><path d="M4.2 8 L0.5 12.2" stroke="#e8e8e8" stroke-width="1.5"/></svg>
<svg style="left:81px;top:541px" width="13" height="13" viewBox="0 0 13 13"><circle cx="6.5" cy="6.5" r="5.4" stroke="#eeeeee" stroke-width="1.6" fill="none"/></svg>
<svg style="left:116px;top:540px" width="14" height="14" viewBox="0 0 14 14"><path d="M1 2 H9 M1 12 H9 M1.5 2 V12 M8.5 2 V12 M1.5 5 H8.5 M1.5 9 H8.5 M12 1 V13" stroke="#e8e8e8" stroke-width="1.2" fill="none"/></svg>
<!-- wechat -->
<svg style="left:151px;top:540px" width="20" height="16" viewBox="0 0 20 16"><ellipse cx="7" cy="6.5" rx="6.5" ry="5.5" fill="#38c03a"/><ellipse cx="13" cy="10.5" rx="5.5" ry="4.5" fill="#f4f4f4"/></svg>
<div class="a" style="left:146px;top:560px;width:29px;height:2px;background:#76b9ed"></div>
<svg style="left:187px;top:539px" width="18" height="18" viewBox="0 0 18 18"><circle cx="9" cy="9" r="8.5" fill="#2d8ff0"/><path d="M4.5 5 L13 7.5 L10 14 Z" fill="#fff"/></svg>
<div class="a" style="left:182px;top:560px;width:29px;height:2px;background:#76b9ed"></div>
<svg style="left:222px;top:539px" width="18" height="18" viewBox="0 0 18 18"><circle cx="9" cy="9" r="8.5" fill="#e2443a"/><path d="M9 0.5 A8.5 8.5 0 0 1 16.4 13.2 L9 9 Z" fill="#f6c026"/><path d="M16.4 13.2 A8.5 8.5 0 0 1 1.6 13.2 L9 9 Z" fill="#2ea44f"/><circle cx="9" cy="9" r="4.2" fill="#fff"/><circle cx="9" cy="9" r="3.2" fill="#3a7be8"/></svg>
<div class="a" style="left:217px;top:560px;width:29px;height:2px;background:#76b9ed"></div>
<div class="a" style="left:250px;top:533px;width:35px;height:29px;background:#4a4644"></div>
<svg style="left:259px;top:539px" width="18" height="18" viewBox="0 0 18 18"><rect width="18" height="18" rx="2" fill="#f4f4f4"/><path d="M5 4 L9 9 L5 14" stroke="#1fa3d8" stroke-width="2" fill="none"/><path d="M10 9 L13 14" stroke="#e4337a" stroke-width="2"/><path d="M10 9 L13 4" stroke="#88c54a" stroke-width="2"/></svg>
<div class="a" style="left:251px;top:560px;width:33px;height:2px;background:#76b9ed"></div>
<svg style="left:294px;top:539px" width="18" height="17" viewBox="0 0 18 17"><rect x="4" y="1" width="13" height="15" fill="#f0f0f0"/><rect x="0" y="3" width="11" height="11" fill="#2b5797"/><path d="M1.5 5 L3 12 L5.5 7 L8 12 L9.5 5" stroke="#fff" stroke-width="1.2" fill="none"/></svg>
<div class="a" style="left:288px;top:560px;width:29px;height:2px;background:#76b9ed"></div>
<svg style="left:330px;top:539px" width="18" height="18" viewBox="0 0 18 18"><circle cx="9" cy="9" r="8.5" fill="#2f9bf0"/><circle cx="12" cy="12" r="2" fill="#fff"/></svg>
<div class="a" style="left:324px;top:560px;width:29px;height:2px;background:#76b9ed"></div>
<svg style="left:366px;top:540px" width="18" height="15" viewBox="0 0 18 15"><path d="M0 1 H7 L8.5 3 H18 V15 H0 Z" fill="#e8b64a"/><rect x="0" y="5" width="18" height="10" fill="#f6d46a"/><rect x="6" y="9" width="6" height="6" fill="#3a8ee0"/></svg>
<div class="a" style="left:360px;top:560px;width:29px;height:2px;background:#76b9ed"></div>
<svg style="left:402px;top:539px" width="17" height="17" viewBox="0 0 17 17"><path d="M15.5 9.5 H4 Q4.5 14 9 14 Q12 14 14.5 12.5 V15.5 Q12 17 8.5 17 Q1 16.5 1 8.5 Q1.5 1 9 0.5 Q16 1 16 8 Z M4.2 7 H12.5 Q12 3.5 8.5 3.5 Q5 3.5 4.2 7 Z" fill="#1e7fd8"/></svg>
<div class="a" style="left:396px;top:560px;width:29px;height:2px;background:#76b9ed"></div>
<!-- tray -->
<svg style="left:801px;top:545px" width="8" height="5" viewBox="0 0 8 5"><path d="M0.5 4.5 L4 1 L7.5 4.5" stroke="#e8e8e8" stroke-width="1.1" fill="none"/></svg>
<svg style="left:816px;top:543px" width="13" height="10" viewBox="0 0 13 10"><rect x="3" y="3" width="9.5" height="6" stroke="#e8e8e8" fill="none"/><rect x="0" y="1" width="4" height="4" fill="#e8e8e8"/></svg>
<svg style="left:834px;top:543px" width="12" height="10" viewBox="0 0 12 10"><path d="M0.5 3 H2.5 L5.5 0.5 V9.5 L2.5 7 H0.5 Z" stroke="#e8e8e8" fill="none"/><path d="M8 3 L11 6.5 M11 3 L8 6.5" stroke="#e8e8e8"/></svg>
<svg style="left:852px;top:542px" width="11" height="11" viewBox="0 0 11 11"><path d="M1 10 A9 9 0 0 1 10 1 M3.5 10 A6.5 6.5 0 0 1 10 3.5 M6 10 A4 4 0 0 1 10 6" stroke="#d8d8d8" stroke-width="1" fill="none"/><circle cx="9.5" cy="9.5" r="1" fill="#fff"/></svg>
<div class="t" style="left:869px;top:542px;font-size:10px;color:#eeeeee">中</div>
<div class="a" style="left:889px;top:542px;width:12px;height:12px;background:#ef5224;transform:rotate(-8deg)"></div>
<div class="t" style="left:891px;top:542px;font-size:11px;color:#fff;font-weight:bold">S</div>
<div class="t" style="left:923px;top:537px;font-size:9px;color:#e8e8e8;height:5px;overflow:hidden"><span style="position:relative;top:-3px">17:09</span></div>
<div class="t" style="left:910px;top:549px;font-size:9.5px;color:#e8e8e8">2019/12/18</div>
<svg style="left:969px;top:541px" width="20" height="19" viewBox="0 0 20 19"><path d="M0.5 0.5 H13 V10 H5 L2.5 12.5 V10 H0.5 Z" stroke="#eee" fill="none"/><path d="M3 3 H10.5 M3 5.5 H10.5 M3 8 H8" stroke="#eee"/><circle cx="13.5" cy="12.5" r="5.5" fill="#2b2622" stroke="#eee"/><text x="13.5" y="15.5" font-size="8" fill="#fff" text-anchor="middle" font-family="Liberation Sans" font-weight="bold">2</text></svg>
<script>
(function(){
  var re = /[\u2E80-\u9FFF\uF900-\uFAFF\uFF00-\uFFEF]+/g;
  var walker = document.createTreeWalker(document.body, NodeFilter.SHOW_TEXT, null);
  var nodes = [];
  while (walker.nextNode()) nodes.push(walker.currentNode);
  nodes.forEach(function(n){
    var t = n.nodeValue;
    if (!t || t.search(re) < 0) return;
    var p = n.parentNode;
    if (!p || (p instanceof SVGElement)) return;
    re.lastIndex = 0;
    var frag = document.createDocumentFragment();
    var last = 0, m;
    while ((m = re.exec(t)) !== null) {
      if (m.index > last) frag.appendChild(document.createTextNode(t.slice(last, m.index)));
      var s = document.createElement('span');
      s.className = 'cjk';
      s.textContent = m[0];
      frag.appendChild(s);
      last = m.index + m[0].length;
    }
    if (last < t.length) frag.appendChild(document.createTextNode(t.slice(last)));
    p.replaceChild(frag, n);
  });
  var spans = document.querySelectorAll('span.cjk');
  for (var i = 0; i < spans.length; i++) {
    var s = spans[i];
    var cs = getComputedStyle(s);
    var fs = parseFloat(cs.fontSize);
    var ls = parseFloat(cs.letterSpacing) || 0;
    var cnt = s.textContent.length;
    var w = s.getBoundingClientRect().width;
    var want = cnt * (fs + ls);
    var d = (want - w) / cnt;
    if (Math.abs(d) > 0.12 * fs) s.style.letterSpacing = (ls + d) + 'px';
  }
})();
</script>
</body></html>
